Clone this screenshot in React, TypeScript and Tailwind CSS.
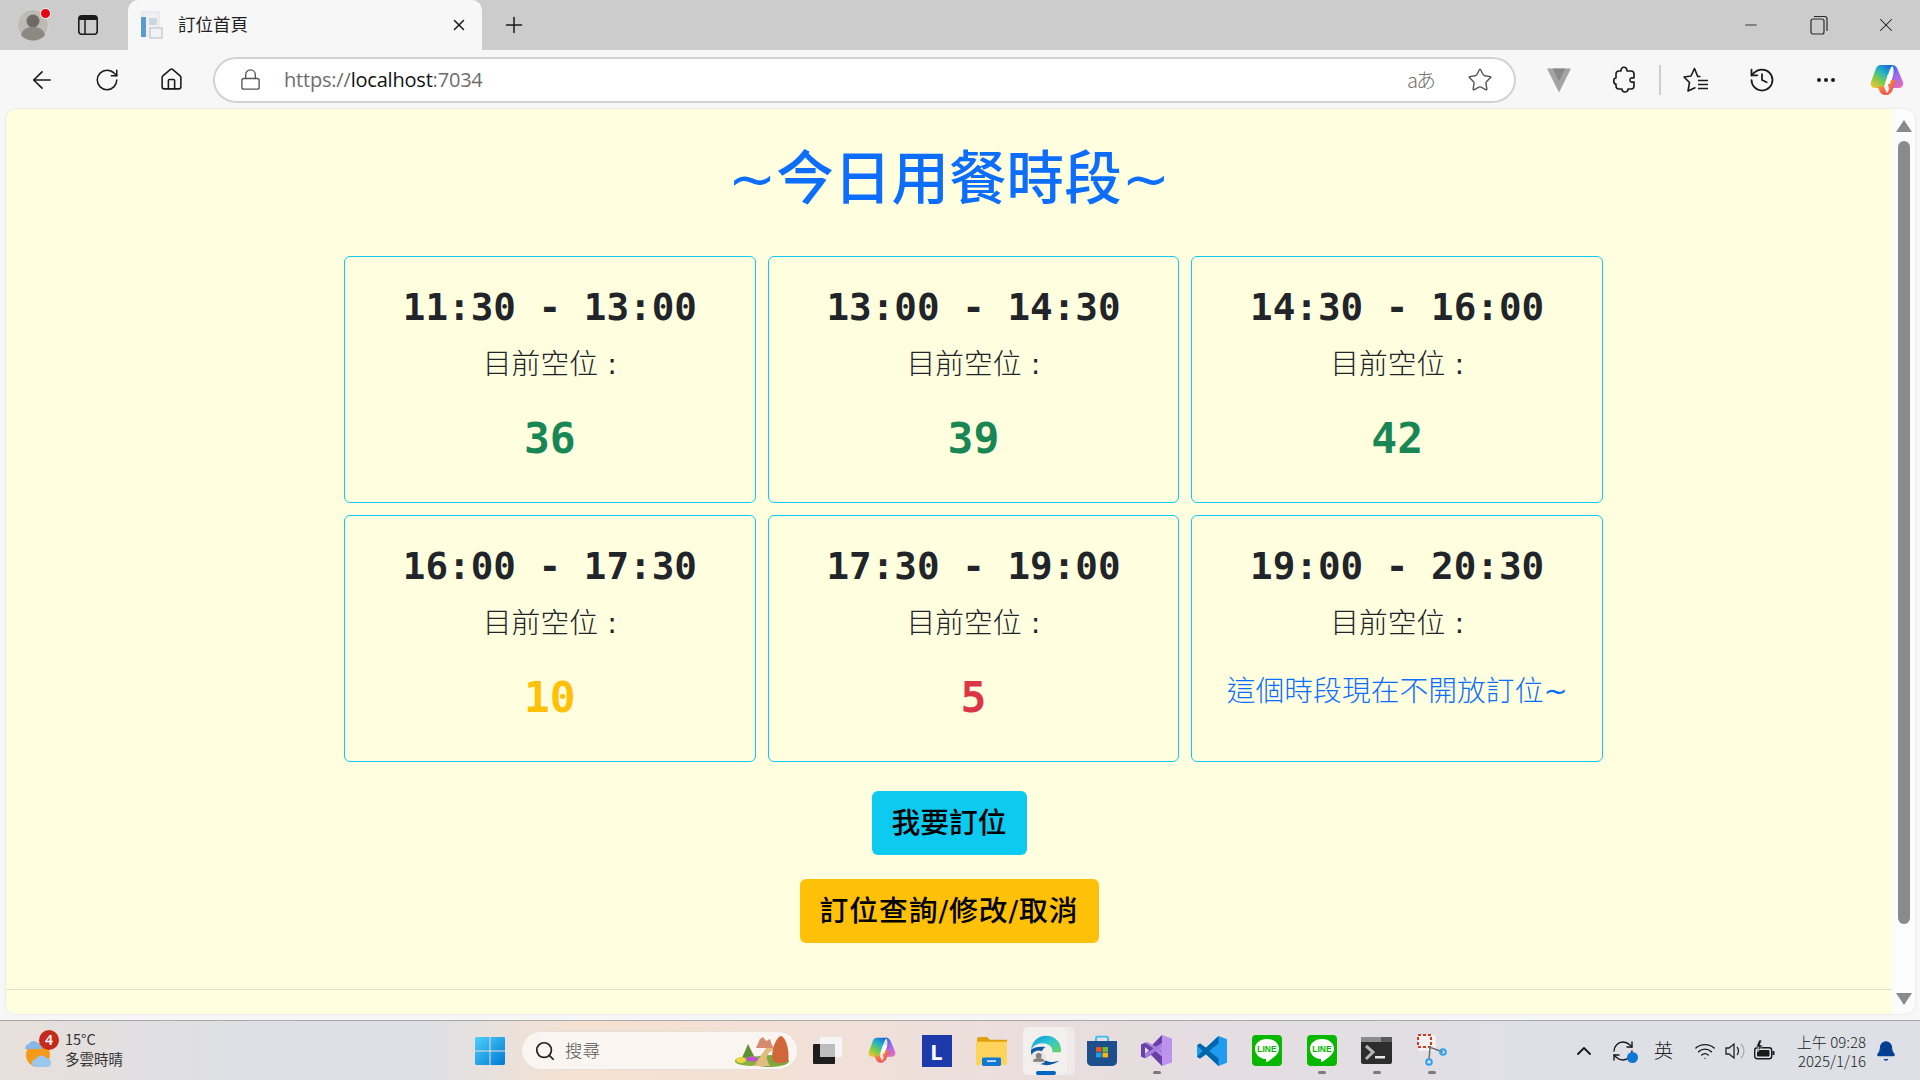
import React from "react";
import { ArrowLeft, RotateCw, RefreshCw, House, Lock, Star, X, Plus, Minus, History, Ellipsis, Wifi, ChevronUp, Bell, Search } from "lucide-react";

const SANS = "font-['Noto_Sans_CJK_TC','Noto_Sans',sans-serif]";
const PAGE = "font-['DejaVu_Sans','Noto_Sans_CJK_TC',sans-serif]";
const MONO = "font-['DejaVu_Sans_Mono','Noto_Sans_CJK_TC',monospace]";

type Slot = { time: string; value?: string; color?: string };
const slots: Slot[] = [
  { time: "11:30 - 13:00", value: "36", color: "text-[#198754]" },
  { time: "13:00 - 14:30", value: "39", color: "text-[#198754]" },
  { time: "14:30 - 16:00", value: "42", color: "text-[#198754]" },
  { time: "16:00 - 17:30", value: "10", color: "text-[#ffc107]" },
  { time: "17:30 - 19:00", value: "5", color: "text-[#dc3545]" },
  { time: "19:00 - 20:30" },
];

function Card({ s }: { s: Slot }) {
  return (
    <div className="h-[247px] border border-[#0dcaf0] rounded-[6px] flex flex-col items-center pt-[26px]">
      <div className={`${MONO} font-bold text-[37.6px] leading-[48px] text-[#212529] whitespace-pre`}>{s.time}</div>
      <div className={`${PAGE} font-light text-[28.8px] leading-[44px] mt-[11px] text-[#212529]`}>
        目前空位 <span className="font-normal">:</span>
      </div>
      {s.value ? (
        <div className={`${MONO} font-bold text-[43px] leading-[42px] mt-[31px] ${s.color}`}>{s.value}</div>
      ) : (
        <div className={`${PAGE} font-light text-[28.8px] leading-[44px] mt-[24px] text-[#0d6efd]`}>
          這個時段現在不開放訂位<span className="font-normal">~</span>
        </div>
      )}
    </div>
  );
}

let copilotId = 0;
function Copilot({ size }: { size: number }) {
  const id = `cp${copilotId++}`;
  return (
    <svg width={size} height={size * 0.94} viewBox="0 0 34 32">
      <defs>
        <linearGradient id={`${id}a`} x1="0.8" y1="0" x2="0.1" y2="1">
          <stop offset="0" stopColor="#1466d8" />
          <stop offset="0.35" stopColor="#25b6c4" />
          <stop offset="0.65" stopColor="#7fcb4a" />
          <stop offset="1" stopColor="#f8c42e" />
        </linearGradient>
        <linearGradient id={`${id}b`} x1="0.2" y1="0" x2="0.8" y2="1">
          <stop offset="0" stopColor="#1f6fe0" />
          <stop offset="0.45" stopColor="#9a6af0" />
          <stop offset="1" stopColor="#ee6ab8" />
        </linearGradient>
        <linearGradient id={`${id}c`} x1="0" y1="0" x2="1" y2="1">
          <stop offset="0" stopColor="#f8a03a" />
          <stop offset="1" stopColor="#ec3f5c" />
        </linearGradient>
      </defs>
      <path d="M11 1h13c-3 1-4 4-5 7l-4 12c-1 3-3 4-6 4H5c-3 0-5-3-4-6L5 7c1-4 3-6 6-6z" fill={`url(#${id}a)`} />
      <path d="M22 1c3 0 5 2 6 5l5 12c1 3-1 6-4 6h-7c-2 0-3-1-2-3l3-9c1-4 1-8-1-11z" fill={`url(#${id}b)`} />
      <path d="M7 22c3 1 5 1 7 0 1 3 2 7 5 9h-4c-4 0-5-3-6-5z" fill={`url(#${id}c)`} />
      <path d="M17 16h9l-3 9c-1 4-4 6-8 6h-1c3-1 4-3 5-6z" fill={`url(#${id}c)`} />
      <path d="M18 10h5l-3 10h-5z" fill="#fff" fillOpacity="0.92" />
    </svg>
  );
}

function TabBar() {
  return (
    <div className="h-[50px] bg-[#cccccc] flex items-end shrink-0">
      <div className="w-[128px] h-[50px] flex items-center shrink-0">
        <div className="w-[66px] flex justify-center">
          <div className="relative w-[32px] h-[32px]">
            <svg width="32" height="32" viewBox="0 0 32 32">
              <circle cx="16" cy="16" r="15.5" fill="#bdbab6" stroke="#d6d3cf" />
              <circle cx="16" cy="12" r="6.5" fill="#6e6a66" />
              <path d="M4 26c2-7 7-8 12-8s10 1 12 8c-3 4-8 5.500-12 5.500S7 30 4 26z" fill="#8c8884" />
            </svg>
            <div className="absolute -top-[1px] right-[-2px] w-[11px] h-[11px] rounded-full bg-[#e60012] border border-white" />
          </div>
        </div>
        <div className="w-[44px] flex justify-center">
          <svg width="20" height="20" viewBox="0 0 20 20">
            <rect x="0.800" y="0.800" width="18.400" height="18.400" rx="3" fill="none" stroke="#1a1a1a" strokeWidth="1.600" />
            <path d="M1 1h18v4H1z" fill="#1a1a1a" />
            <path d="M7 5v14" stroke="#1a1a1a" strokeWidth="1.500" />
          </svg>
        </div>
      </div>
      <div className="w-[354px] h-[50px] bg-[#f7f7f7] rounded-t-[10px] flex items-center pl-[11px] shrink-0">
        <svg width="24" height="28" viewBox="0 0 24 28">
          <rect x="3" y="1" width="17" height="24" fill="#eef0f3" stroke="#dfe2e6" />
          <rect x="2" y="6" width="5" height="20" fill="#5b9bd0" />
          <rect x="10" y="7" width="8" height="7" fill="#cfd5dc" />
          <rect x="11" y="17" width="12" height="10" fill="#f1f3f5" stroke="#b5bcc4" />
        </svg>
        <span className={`${SANS} text-[17.5px] text-[#1f1f1f] ml-[15px] mb-[2px] flex-1`}>訂位首頁</span>
        <X size={18} strokeWidth={2} className="text-[#1a1a1a] mr-[14px]" />
      </div>
      <div className="w-[64px] h-[50px] flex items-center justify-center shrink-0">
        <Plus size={26} strokeWidth={1.4} className="text-[#1a1a1a]" />
      </div>
      <div className="flex-1" />
      <div className="h-[50px] flex items-center pr-[1px]">
        <div className="w-[67px] flex justify-center mr-[1px]"><Minus size={18} strokeWidth={1.1} className="text-[#1a1a1a]" /></div>
        <div className="w-[67px] flex justify-center">
          <svg width="18" height="20" viewBox="0 0 18 20" fill="none" stroke="#2a2a2a" strokeWidth="1.200">
            <rect x="1" y="4" width="13" height="15" rx="2" />
            <path d="M4 1.500h10.500a2.500 2.500 0 0 1 2.500 2.500v12" />
          </svg>
        </div>
        <div className="w-[67px] flex justify-center"><X size={22} strokeWidth={1.1} className="text-[#1a1a1a]" /></div>
      </div>
    </div>
  );
}

function Toolbar() {
  return (
    <div className="h-[59px] bg-[#f7f7f7] flex items-center shrink-0 pl-[9px]">
      <div className="w-[65px] flex justify-center"><ArrowLeft size={28} strokeWidth={1.4} className="text-[#1a1a1a]" /></div>
      <div className="w-[65px] flex justify-center"><RotateCw size={26} strokeWidth={1.4} className="text-[#1a1a1a]" /></div>
      <div className="w-[65px] flex justify-center"><House size={25} strokeWidth={1.5} className="text-[#1a1a1a]" /></div>
      <div className="w-[1303px] ml-[9px] h-[46px] bg-white border-2 border-[#d2d2d2] rounded-full flex items-center shrink-0">
        <Lock size={23} strokeWidth={1.4} className="text-[#555] ml-[24px]" />
        <span className="font-['Open_Sans',sans-serif] text-[20px] tracking-[-0.2px] ml-[22px] text-[#6d6d6d]">
          https://<span className="text-[#111]">localhost</span>:7034
        </span>
        <div className="flex-1" />
        <span className="font-['Noto_Sans_CJK_JP',sans-serif] font-light text-[20px] tracking-[-2px] text-[#707070] mr-[33px]">aあ</span>
        <Star size={26} strokeWidth={1.3} className="text-[#555] mr-[21px]" />
      </div>
      <div className="w-[31px] shrink-0" />
      <div className="w-[24px] flex justify-center shrink-0">
        <svg width="25" height="26" viewBox="0 0 25 26">
          <path d="M0 1h25L12.500 26z" fill="#a3a3a3" />
          <path d="M6 1h13l-6.500 13z" fill="#888" />
        </svg>
      </div>
      <div className="w-[42px] shrink-0" />
      <svg width="22" height="28" viewBox="0 0 22 28" fill="none" stroke="#1a1a1a" strokeWidth="1.600" className="shrink-0" strokeLinejoin="round">
        <path d="M8 5c0-5 6-5 6 0h4c2 0 3 1 3 3v4c-1 0-4-1-4 2s3 2 4 2v4c0 2-1 3-3 3h-3c0 4-6 4-6 0H6c-2 0-3-1-3-3v-2c-3 0-3-6 0-6V8c0-2 1-3 3-3z" />
      </svg>
      <div className="w-[24px] shrink-0" />
      <div className="w-[2px] h-[30px] bg-[#cfcfcf] shrink-0" />
      <div className="w-[22px] shrink-0" />
      <svg width="26" height="26" viewBox="0 0 26 26" fill="none" stroke="#1a1a1a" strokeWidth="1.600" strokeLinejoin="round" className="shrink-0">
        <path d="M17.500 9.500h-2.800L11.500 1.500 8 9 1 10l5.500 5.500L5 24l7.500-3.500" />
        <path d="M15 13.500h10M15 17.500h10M15 21.500h10" />
      </svg>
      <div className="w-[39px] shrink-0" />
      <History size={28} strokeWidth={1.5} className="text-[#1a1a1a] shrink-0" />
      <div className="w-[38px] shrink-0" />
      <Ellipsis size={24} strokeWidth={2} className="text-[#1a1a1a] shrink-0" />
      <div className="w-[32px] shrink-0" />
      <Copilot size={34} />
    </div>
  );
}

function Panel() {
  return (
    <div className="h-[905px] mx-[5px] ml-[6px] rounded-[10px] overflow-hidden flex shrink-0 shadow-[0_0_2px_rgba(0,0,0,0.15)]">
      <div className="w-[1886px] bg-[#ffffe0] flex flex-col items-center">
        <h1 className={`${PAGE} h-[143px] flex items-center text-[57.6px] font-medium text-[#0d6efd] whitespace-nowrap`}>~今日用餐時段~</h1>
        <div className="w-[1259px] self-start ml-[338px] mt-[4px] grid grid-cols-3 gap-x-[12px] gap-y-[12px]">
          {slots.map((s) => (
            <Card key={s.time} s={s} />
          ))}
        </div>
        <button className={`${PAGE} mt-[29px] w-[155px] h-[64px] pt-[2px] rounded-[6px] bg-[#0dcaf0] text-[28.8px] font-medium text-black`}>我要訂位</button>
        <button className={`${PAGE} mt-[24px] w-[299px] h-[64px] pt-[2px] rounded-[6px] bg-[#ffc107] text-[28.8px] tracking-[0.9px] font-medium text-black`}>訂位查詢/修改/取消</button>
        <div className="mt-[46px] w-full h-[1px] bg-[#dfdfd0]" />
      </div>
      <div className="flex-1 bg-[#fcfcfc] relative flex flex-col items-center">
        <svg width="16" height="12" viewBox="0 0 16 12" className="mt-[11px]"><path d="M8 0l8 12H0z" fill="#8a8a8a" /></svg>
        <div className="w-[12px] h-[783px] rounded-full bg-[#8a8a8a] mt-[9px]" />
        <div className="flex-1" />
        <svg width="16" height="12" viewBox="0 0 16 12" className="mb-[9px]"><path d="M8 12L16 0H0z" fill="#8a8a8a" /></svg>
      </div>
    </div>
  );
}

function TaskSlot({ children, dot, active }: { children: React.ReactNode; dot?: boolean; active?: boolean }) {
  return (
    <div className="relative w-[55px] h-[52px] flex items-center justify-center shrink-0">
      {active && <div className="absolute left-[8px] top-[2px] w-[48px] h-[48px] rounded-[5px] bg-[#efe9e9]" />}
      {active && <div className="absolute left-[4px] top-[2px] w-[44px] h-[48px] rounded-[5px] bg-[#f4efef]" />}
      <div className="relative flex">{children}</div>
      {dot && <div className="absolute bottom-[3px] left-[24px] w-[8px] h-[3px] rounded-full bg-[#7a7a7a]" />}
      {active && <div className="absolute bottom-[2px] left-[17px] w-[20px] h-[4px] rounded-full bg-[#0067c0]" />}
    </div>
  );
}

function LineIcon() {
  return (
    <svg width="30" height="31" viewBox="0 0 30 31">
      <rect width="30" height="31" rx="4" fill="#08b700" />
      <path d="M15 4c7.500 0 12 4.500 12 9.500 0 6-6 9.500-12 13.500-1 .5-1-1-1-3C7 23.500 3 19 3 13.500 3 8.500 7.500 4 15 4z" fill="#fff" />
      <text x="15" y="17" textAnchor="middle" fontSize="8.500" fontWeight="700" fill="#08b700" fontFamily="Liberation Sans">LINE</text>
    </svg>
  );
}

function Taskbar() {
  return (
    <div className="h-[60px] mt-[6px] border-t border-[#a9a9a9] flex items-center shrink-0 relative bg-[linear-gradient(90deg,#e8e0da_0%,#e0dfe2_8%,#dde0e6_16%,#dde0e6_22%,#f6e2d2_30%,#f3e1d6_40%,#e6dde0_60%,#dfe0e6_80%,#dde0e6_100%)]">
      <div className="w-[480px] flex items-center shrink-0 pl-[24px]">
        <div className="relative w-[36px] h-[40px]">
          <svg width="36" height="40" viewBox="0 0 36 40">
            <circle cx="14" cy="24" r="12" fill="#f59a1b" />
            <path d="M1 18c0-3 2-5 4-5 1-4 8-4 9 0 3 0 4 2 4 5z" fill="#86b7e8" />
            <path d="M12 36c-2 0-4-1-4-4s2-4 4-4c1-4 8-5 10-1 3 0 5 2 5 5s-2 4-4 4z" fill="#9cc6ee" />
          </svg>
          <div className="absolute left-[15px] top-[-1px] w-[20px] h-[20px] rounded-full bg-[#c42b1c] text-white text-[14px] font-['Noto_Sans'] font-semibold flex items-center justify-center">4</div>
        </div>
        <div className={`${SANS} ml-[5px] text-[14.5px] leading-[20px] text-[#333] mt-[-3px]`}>
          <div>15°C</div>
          <div>多雲時晴</div>
        </div>
      </div>
      <svg width="30" height="30" viewBox="0 0 30 30" className="shrink-0 ml-[-5px]">
        <defs>
          <linearGradient id="win" x1="0" y1="0" x2="1" y2="1">
            <stop offset="0" stopColor="#4fd0fb" />
            <stop offset="1" stopColor="#0078d4" />
          </linearGradient>
        </defs>
        <path d="M1 1h13.500v13.500H0V2zM15.500 1H29a1 1 0 0 1 1 1v12.500H15.500zM0 15.500h14.500V29H1l-1-1zM15.500 15.500H30V28l-1 1H15.500z" fill="url(#win)" />
      </svg>
      <div className="w-[277px] h-[39px] ml-[16px] rounded-full bg-[#fbf5f1] border border-[#e6dfda] flex items-center shrink-0 pl-[12px]">
        <Search size={22} strokeWidth={1.9} className="text-[#222]" />
        <span className={`${SANS} text-[17.5px] font-light text-[#555] ml-[9px] flex-1`}>搜尋</span>
        <svg width="56" height="34" viewBox="0 0 56 34" className="mr-[7px]">
          <ellipse cx="36" cy="27" rx="19" ry="6" fill="#7da83c" />
          <ellipse cx="16" cy="27" rx="15" ry="5" fill="#8ab040" />
          <path d="M20 32l12-18c2-3 8-3 10 0l-6 4c-5 4-3 8 0 14z" fill="#e0bc80" />
          <path d="M39 27c-3-9 3-24 8-25 5 1 9 16 7 25-4 3-11 3-15 0z" fill="#d0673a" />
          <path d="M22 14l4-9 3-2 3 4 4-2 3 9z" fill="#d68a6c" />
          <path d="M8 24l6-14 6 12z" fill="#5f8f30" />
          <ellipse cx="7" cy="26" rx="5" ry="3" fill="#ecd745" />
          <ellipse cx="18" cy="25" rx="6" ry="2.500" fill="#c04fd0" />
        </svg>
      </div>
      <div className="flex items-center ml-[1px] h-[52px]">
        <TaskSlot>
          <svg width="30" height="28" viewBox="0 0 30 28">
            <rect x="8" y="0" width="22" height="20" rx="1" fill="#f5f5f5" />
            <rect x="1" y="7" width="22" height="20" rx="1" fill="#1d1d1d" />
            <rect x="8" y="7" width="15" height="13" fill="#bdbdbd" />
          </svg>
        </TaskSlot>
        <TaskSlot><Copilot size={28} /></TaskSlot>
        <TaskSlot>
          <div className="w-[30px] h-[32px] bg-[#1c3aa9] flex items-center justify-center text-white font-['Noto_Sans'] font-bold text-[22px] leading-none">L</div>
        </TaskSlot>
        <TaskSlot>
          <svg width="31" height="30" viewBox="0 0 31 32" preserveAspectRatio="none">
            <path d="M1 3a2 2 0 0 1 2-2h8l3 3h17v10H1z" fill="#e0a10c" />
            <path d="M0 6h31v24a1 1 0 0 1-1 1H1a1 1 0 0 1-1-1z" fill="#ffd45c" />
            <rect x="6" y="23" width="19" height="9" rx="1.500" fill="#0f78d4" />
            <rect x="11" y="26" width="9" height="1.500" fill="#fff" />
          </svg>
        </TaskSlot>
        <TaskSlot active>
          <svg width="31" height="31" viewBox="0 0 32 36" preserveAspectRatio="none">
            <defs>
              <linearGradient id="edge" x1="0" y1="0" x2="1" y2="1">
                <stop offset="0" stopColor="#0d8fd8" />
                <stop offset="0.5" stopColor="#30c9d0" />
                <stop offset="1" stopColor="#6fd35a" />
              </linearGradient>
            </defs>
            <path d="M16 1C7 1 1 8 0 17c3-6 9-8 14-7 6 1 9 6 8 10h9c1-11-6-19-15-19z" fill="url(#edge)" />
            <path d="M0 17c-1 10 7 18 16 18 5 0 10-2 13-5-7 3-16 1-18-6-1-4 1-8 4-10-6-1-12 0-15 3z" fill="#0c59a4" />
            <circle cx="8" cy="26" r="8" fill="#e9e6e6" />
            <circle cx="8" cy="24" r="3" fill="#7f7f7f" />
            <path d="M2 31c1-4 3-4 6-4s5 0 6 4z" fill="#7f7f7f" />
          </svg>
        </TaskSlot>
        <TaskSlot>
          <svg width="30" height="31" viewBox="0 0 30 36" preserveAspectRatio="none">
            <path d="M9 9V4a2 2 0 0 1 2-2h8a2 2 0 0 1 2 2v5" fill="none" stroke="#35c0f0" strokeWidth="2" />
            <path d="M0 7h30v24a5 5 0 0 1-5 5H5a5 5 0 0 1-5-5z" fill="#1c4f8c" />
            <rect x="9" y="14" width="5.500" height="5.500" fill="#e8542a" />
            <rect x="15.500" y="14" width="5.500" height="5.500" fill="#7cb82a" />
            <rect x="9" y="20.500" width="5.500" height="5.500" fill="#1aa0e8" />
            <rect x="15.500" y="20.500" width="5.500" height="5.500" fill="#f8b90c" />
          </svg>
        </TaskSlot>
        <TaskSlot dot>
          <svg width="31" height="31" viewBox="0 0 31 36" preserveAspectRatio="none">
            <path d="M21 0l10 4v28l-10 4-11-13-6 4-4-2V11l4-2 6 4z" fill="#bd93ee" />
            <path d="M21 0v9l-7 9 7 7v11L10 23l-6 4-4-2V11l4-2 6 4z" fill="#6a3fa8" />
            <path d="M4 14v8l4-4z" fill="#e5d5f8" />
            <path d="M21 9L4 22v5l17-13zM4 9l17 13v-5L6 8z" fill="#a77ee0" />
          </svg>
        </TaskSlot>
        <TaskSlot>
          <svg width="30" height="30" viewBox="0 0 30 36" preserveAspectRatio="none">
            <path d="M21.500 0L30 4v28l-8.500 4L9 22l-6 5-3-2V11l3-2 6 5z" fill="#1f9cf0" />
            <path d="M21.500 0v9L12 18l9.500 9v9L9 22l-6 5-3-2 5.500-7L0 11l3-2 6 5z" fill="#0065a9" />
          </svg>
        </TaskSlot>
        <TaskSlot><LineIcon /></TaskSlot>
        <TaskSlot dot><LineIcon /></TaskSlot>
        <TaskSlot dot>
          <svg width="31" height="27" viewBox="0 0 31 27">
            <rect width="31" height="27" rx="2" fill="#2d2d2d" />
            <rect width="31" height="5" fill="#8c8c8c" />
            <rect x="20" width="11" height="5" fill="#5c5c5c" />
            <path d="M5 9l7 6-7 7" fill="none" stroke="#b5b5b5" strokeWidth="3" />
            <rect x="14" y="19" width="10" height="2.500" fill="#e8e8e8" />
          </svg>
        </TaskSlot>
        <TaskSlot dot>
          <svg width="32" height="34" viewBox="0 0 32 34">
            <rect x="2" y="1" width="18" height="16" rx="2" fill="#f2f2f2" />
            <rect x="2" y="1" width="13" height="12" fill="none" stroke="#d13a1a" strokeWidth="2" strokeDasharray="3 2" />
            <path d="M13 13l14 5M14 14l-1 11" stroke="#707070" strokeWidth="1.500" />
            <circle cx="27" cy="18" r="2.800" fill="none" stroke="#2aa3ec" strokeWidth="2" />
            <circle cx="13" cy="28" r="2.800" fill="none" stroke="#2aa3ec" strokeWidth="2" />
          </svg>
        </TaskSlot>
      </div>
      <div className="flex-1" />
      <div className="flex items-center h-full shrink-0 pr-[23px]">
        <ChevronUp size={24} strokeWidth={1.8} className="text-[#1a1a1a]" />
        <div className="w-[15px]" />
        <div className="relative w-[24px] h-[24px]">
          <RefreshCw size={24} strokeWidth={1.4} className="text-[#1a1a1a]" />
          <div className="absolute right-[-3px] bottom-[0px] w-[11px] h-[11px] rounded-full bg-[#0f78d4]" />
        </div>
        <span className={`${SANS} font-light text-[19px] text-[#222] ml-[19px]`}>英</span>
        <Wifi size={22} strokeWidth={1.5} className="text-[#1a1a1a] ml-[21px]" />
        <svg width="22" height="20" viewBox="0 0 22 20" fill="none" stroke="#222" strokeWidth="1.300" className="ml-[9px]">
          <path d="M1 7v6h3l5 4V3L4 7z" />
          <path d="M12 6c2 2 2 6 0 8" />
          <path d="M16 3c4 4 4 10 0 14" stroke="#aaa" />
        </svg>
        <svg width="22" height="22" viewBox="0 0 22 22" className="ml-[6px]">
          <rect x="1.700" y="7.700" width="17" height="11" rx="2.500" fill="none" stroke="#1a1a1a" strokeWidth="1.400" />
          <rect x="4" y="10" width="12.500" height="6.500" rx="1" fill="#1a1a1a" />
          <rect x="19.500" y="11" width="2" height="4" fill="#1a1a1a" />
          <path d="M6 0L3 7h3l-1.500 5L10 5H7l2-5z" fill="#1a1a1a" stroke="#e0e0e6" strokeWidth="0.700" />
        </svg>
        <div className={`${SANS} ml-[19px] w-[72px] text-[15px] leading-[19px] text-[#222] text-right font-light whitespace-nowrap`}>
          <div>上午 09:28</div>
          <div>2025/1/16</div>
        </div>
        <Bell size={22} fill="#003e92" strokeWidth={1.2} className="text-[#003e92] ml-[9px]" />
      </div>
    </div>
  );
}

export default function App() {
  return (
    <div className="w-[1920px] h-[1080px] bg-[#f7f7f7] flex flex-col overflow-hidden">
      <TabBar />
      <Toolbar />
      <Panel />
      <Taskbar />
    </div>
  );
}
